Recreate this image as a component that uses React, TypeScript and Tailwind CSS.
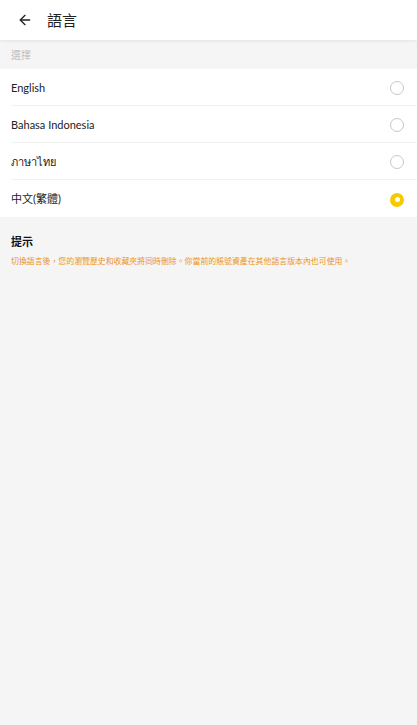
import { ArrowLeft } from "lucide-react";

const langs = [
  { id: "en", label: "English" },
  { id: "id", label: "Bahasa Indonesia" },
  { id: "th", label: "ภาษาไทย" },
  { id: "zh", label: "中文(繁體)" },
];

export default function App() {
  const selected = "zh";
  return (
    <div
      className="min-h-[725px] w-full bg-[#f5f5f5] text-[#222]"
      style={{ fontFamily: '"Lato", "Noto Sans", "Noto Sans CJK TC", sans-serif' }}
    >
      {/* Header */}
      <div className="h-10 bg-white flex items-center px-[17px] gap-[14px] shadow-[0_1px_3px_rgba(0,0,0,0.08)] relative z-10">
        <ArrowLeft className="h-[16px] w-[16px] text-[#222]" strokeWidth={2} />
        <span className="text-[15px] leading-none">語言</span>
      </div>

      {/* Section label */}
      <div className="h-[29px] flex items-center pt-[1px] px-[11px] text-[10px] text-[#bbb]">選擇</div>

      {/* Options */}
      <div className="bg-white">
        {langs.map((l, i) => (
          <div
            key={l.id}
            className={`h-[37px] ml-[11px] pr-[13px] pt-[2px] flex items-center justify-between ${
              i < langs.length - 1 ? "border-b border-[#f2f2f2]" : ""
            }`}
          >
            <span className="text-[11px]">{l.label}</span>
            {l.id === selected ? (
              <span className="h-[14px] w-[14px] rounded-full bg-[#f7c900] grid place-items-center">
                <span className="h-[5px] w-[5px] rounded-full bg-white" />
              </span>
            ) : (
              <span className="h-[14px] w-[14px] rounded-full border border-[#c8c8c8]" />
            )}
          </div>
        ))}
      </div>

      {/* Tip */}
      <div className="px-[11px] pt-[17px]">
        <div className="text-[11px] font-bold text-[#111] leading-[16px]">提示</div>
        <p className="mt-[5px] text-[7.9px] leading-[12px] text-[#ec9418] whitespace-nowrap">
          切換語言後，您的瀏覽歷史和收藏夾將同時刪除。你當前的賬號資產在其他語言版本內也可使用。
        </p>
      </div>
    </div>
  );
}
